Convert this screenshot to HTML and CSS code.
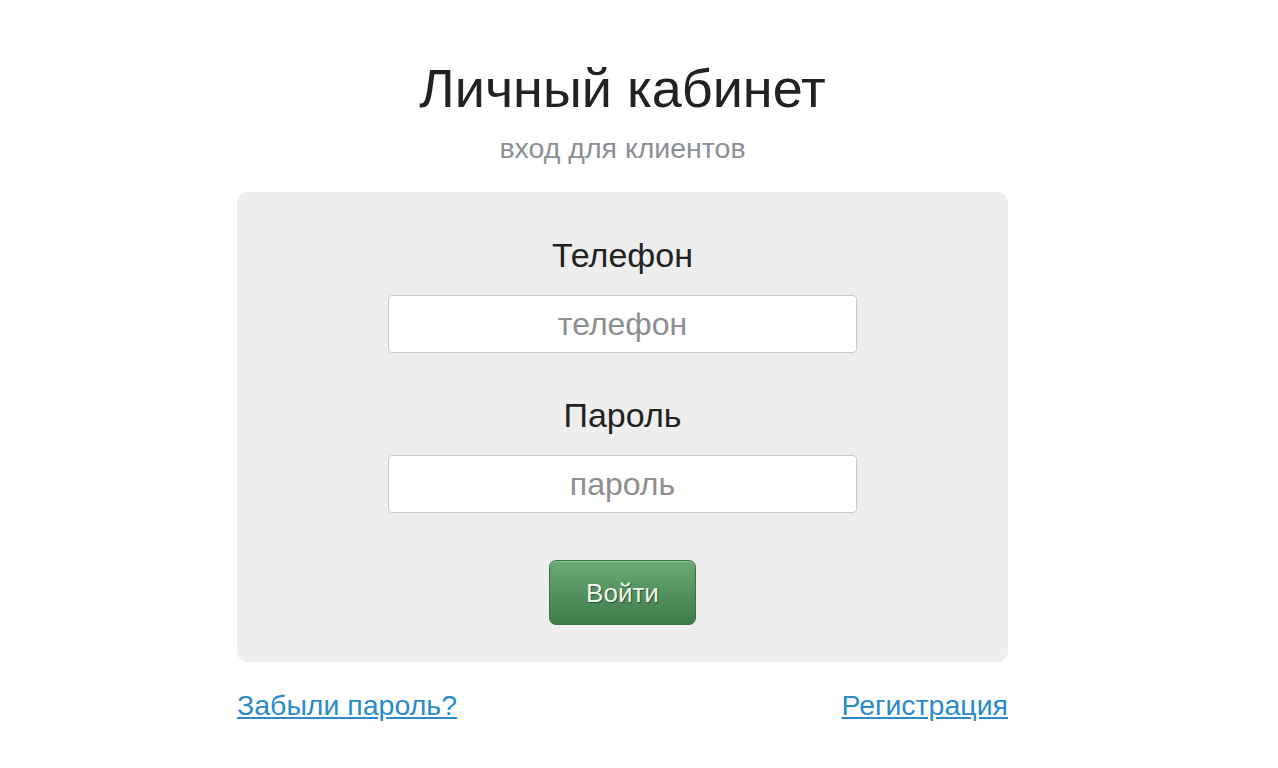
FILE: index.html
```html
<!DOCTYPE html>
<html lang="ru">
<head>
<meta charset="utf-8">
<title>Личный кабинет</title>
<link rel="stylesheet" href="styles.css">
</head>
<body>
<main class="page">
  <h1 class="title">Личный кабинет</h1>
  <p class="subtitle">вход для клиентов</p>
  <form class="card">
    <label class="label" for="phone">Телефон</label>
    <input class="field" id="phone" type="text" placeholder="телефон">
    <label class="label label-second" for="pass">Пароль</label>
    <input class="field" id="pass" type="password" placeholder="пароль">
    <button class="btn" type="button">Войти</button>
  </form>
  <div class="links">
    <a href="#" class="link">Забыли пароль?</a>
    <a href="#" class="link">Регистрация</a>
  </div>
</main>
</body>
</html>
```
FILE: styles.css
```css
* { box-sizing: border-box; }
html, body { margin: 0; padding: 0; background: #fff; }
body { font-family: "Liberation Sans", Arial, sans-serif; color: #222; }
.page {
  width: 771px;
  margin-left: calc(50% - 402px);
  padding-top: 56px;
  display: flex;
  flex-direction: column;
  align-items: center;
}
.title {
  margin: 0;
  font-size: 54px;
  font-weight: normal;
  line-height: 64px;
  color: #222;
}
.subtitle {
  margin: 11px 0 0;
  font-size: 28.5px;
  line-height: 34px;
  color: #8a9095;
}
.card {
  margin-top: 27px;
  width: 771px;
  height: 470px;
  background: #eeeeee;
  border-radius: 11px;
  display: flex;
  flex-direction: column;
  align-items: center;
  padding-top: 43px;
}
.label {
  font-size: 34px;
  line-height: 40px;
  color: #222;
}
.label-second { margin-top: 42px; }
.field {
  margin-top: 20px;
  width: 469px;
  height: 58px;
  border: 1px solid #c9c9c9;
  border-radius: 4px;
  background: #fff;
  font-family: inherit;
  font-size: 32px;
  text-align: center;
  color: #333;
}
.field::placeholder { color: #8e8e8e; }
.btn {
  margin-top: 47px;
  width: 147px;
  height: 65px;
  padding-top: 2px;
  border: 1px solid #3b7546;
  border-radius: 7px;
  background: linear-gradient(#6aa974, #3e7c4a);
  color: #eef6ea;
  font-family: inherit;
  font-size: 26px;
  text-shadow: 1px 1px 1px #2c4f30;
  box-shadow: inset 0 1px 0 rgba(255,255,255,0.25);
}
.links {
  width: 771px;
  margin-top: 26px;
  display: flex;
  justify-content: space-between;
}
.link {
  font-size: 28.5px;
  line-height: 34px;
  color: #2a8acb;
  text-decoration: underline;
}
```
